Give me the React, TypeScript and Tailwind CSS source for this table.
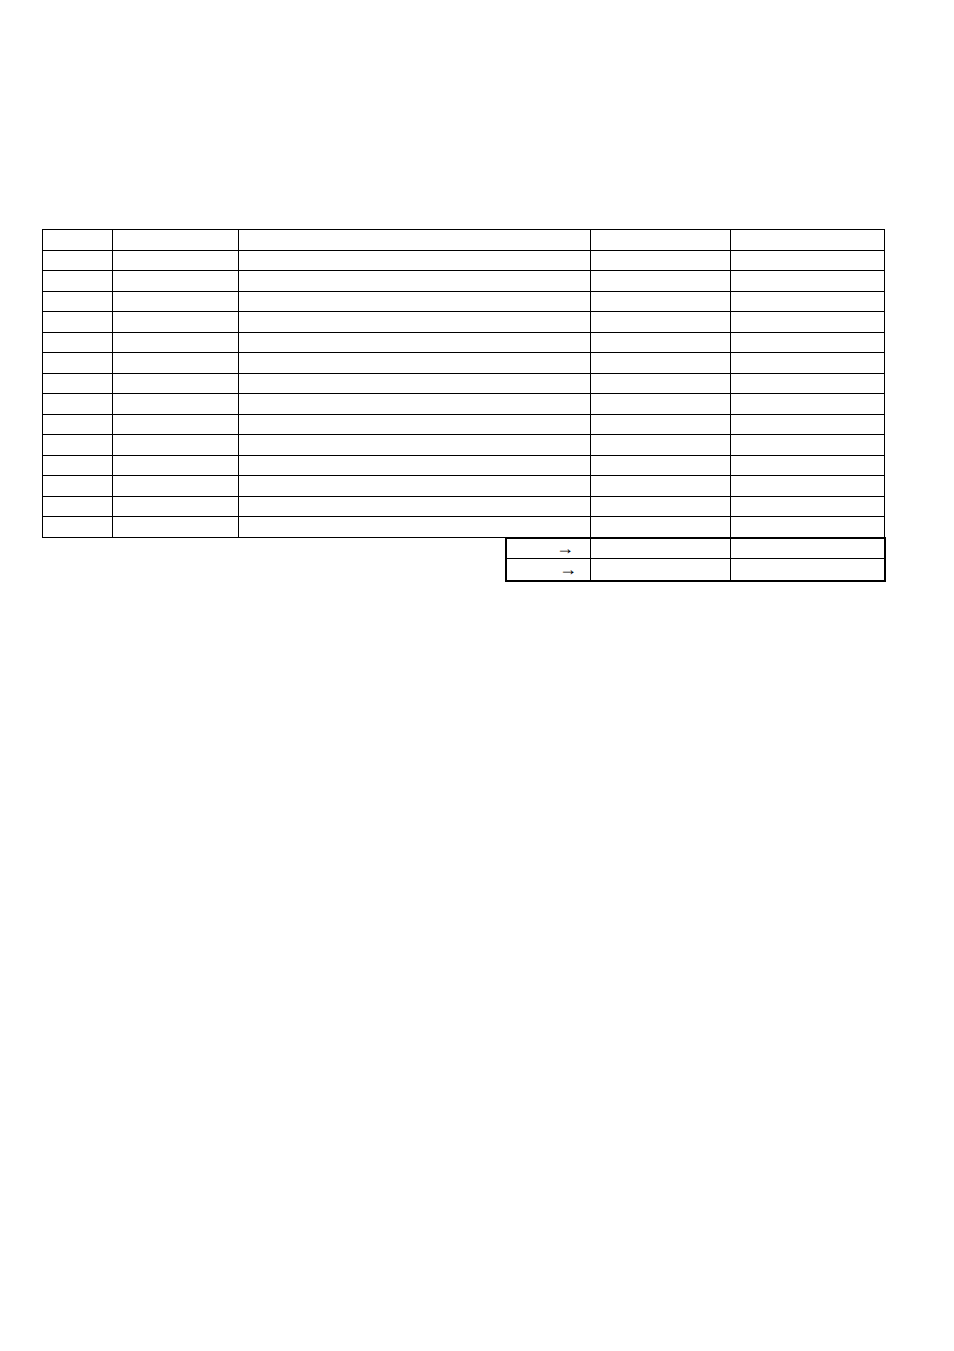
import React from 'react';

const cols = ['w-[70px]', 'w-[126px]', 'w-[352px]', 'w-[140px]', 'w-[154px]'];
const rows = Array.from({ length: 15 }, (_, i) => i);

const SummaryRow = ({ last, arrowPad }: { last?: boolean; arrowPad: string }) => (
  <div className={`flex ${last ? 'h-[21px]' : 'h-[20px] border-b border-black'}`}>
    <div
      className={`w-[84px] border-r border-black flex items-center justify-end ${arrowPad} text-[18px] leading-none text-black`}
      style={{ fontFamily: '"Liberation Serif", serif' }}
    >
      →
    </div>
    <div className="w-[140px] border-r border-black" />
    <div className="w-[153px]" />
  </div>
);

export default function App() {
  return (
    <div className="min-h-[1351px] w-[954px] bg-white pl-[42px] pt-[229px]">
      <div className="w-[843px] border-l border-t border-black">
        {rows.map((r) => (
          <div key={r} className="flex h-[20.5px]">
            {cols.map((w, i) => (
              <div key={i} className={`${w} border-r border-b border-black`} />
            ))}
          </div>
        ))}
      </div>
      <div className="ml-[463px] w-[381px] border-2 border-black -mt-px">
        <SummaryRow arrowPad="pr-[16px]" />
        <SummaryRow last arrowPad="pr-[13px]" />
      </div>
    </div>
  );
}
